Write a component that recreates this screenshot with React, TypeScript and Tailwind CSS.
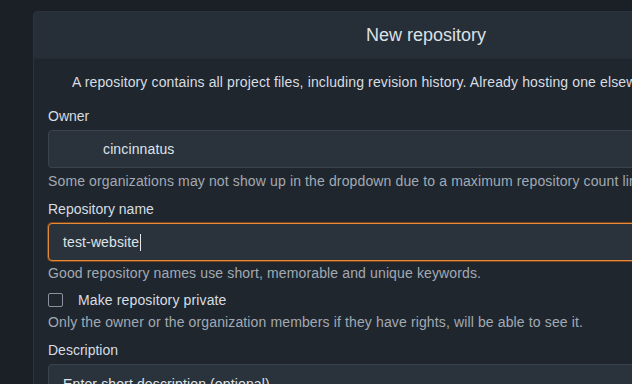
import React from 'react';

const inputBase =
  'h-[38px] w-full rounded-[4px] border bg-[#2a333c] px-[14px] text-[14px] text-[#dfe3e8] outline-none';

export default function App() {
  return (
    <div
      className="min-h-screen overflow-hidden bg-[#1b2027] pl-[33px] pt-[11px] text-[14px] leading-[20px] text-[#d8dde2]"
      style={{ fontFamily: '"Liberation Sans", Arial, sans-serif' }}
    >
      <div className="w-[786px] rounded-t-[4px] border border-[#2b333c]">
        <div className="flex h-[47px] items-center justify-center border-b border-[#232a32] bg-[#262e37] text-[18px] text-[#dce1e6]">
          New repository
        </div>
        <div className="flex flex-col bg-[#1f262e] px-[14px] pt-[13px] pb-6 tracking-[0.13px]">
          <p className="whitespace-nowrap pl-[24px] text-[#d8dde2]">
            A repository contains all project files, including revision history. Already hosting one elsewhere?
            Migrate repository.
          </p>

          <label className="mt-[14px] tracking-normal">Owner</label>
          <div className={`${inputBase} mt-[4px] flex items-center border-[#3b444e] pl-[54px]`}>cincinnatus</div>
          <p className="mt-[3px] whitespace-nowrap text-[#a2aab3]">
            Some organizations may not show up in the dropdown due to a maximum repository count limit.
          </p>

          <label className="mt-[8px] tracking-normal">Repository name</label>
          <div className={`${inputBase} mt-[4px] flex items-center border-[#e38a3b] shadow-[0_0_0_1px_#7a4318]`}>
            test-website<span className="ml-px inline-block h-[17px] w-px bg-[#e6e9ec]" />
          </div>
          <p className="mt-[2px] whitespace-nowrap text-[#a2aab3]">
            Good repository names use short, memorable and unique keywords.
          </p>

          <div className="mt-[7px] flex items-center">
            <span className="inline-block h-[14px] w-[15px] rounded-[2px] border border-[#8a939d] bg-[#1f262e]" />
            <span className="ml-[15px]">Make repository private</span>
          </div>
          <p className="mt-[2px] whitespace-nowrap text-[#a2aab3]">
            Only the owner or the organization members if they have rights, will be able to see it.
          </p>

          <label className="mt-[8px] tracking-normal">Description</label>
          <div className={`${inputBase} mt-[4px] flex h-[70px] items-start border-[#3b444e] pt-[9px] text-[#7f8892]`}>
            Enter short description (optional)
          </div>
        </div>
      </div>
    </div>
  );
}
